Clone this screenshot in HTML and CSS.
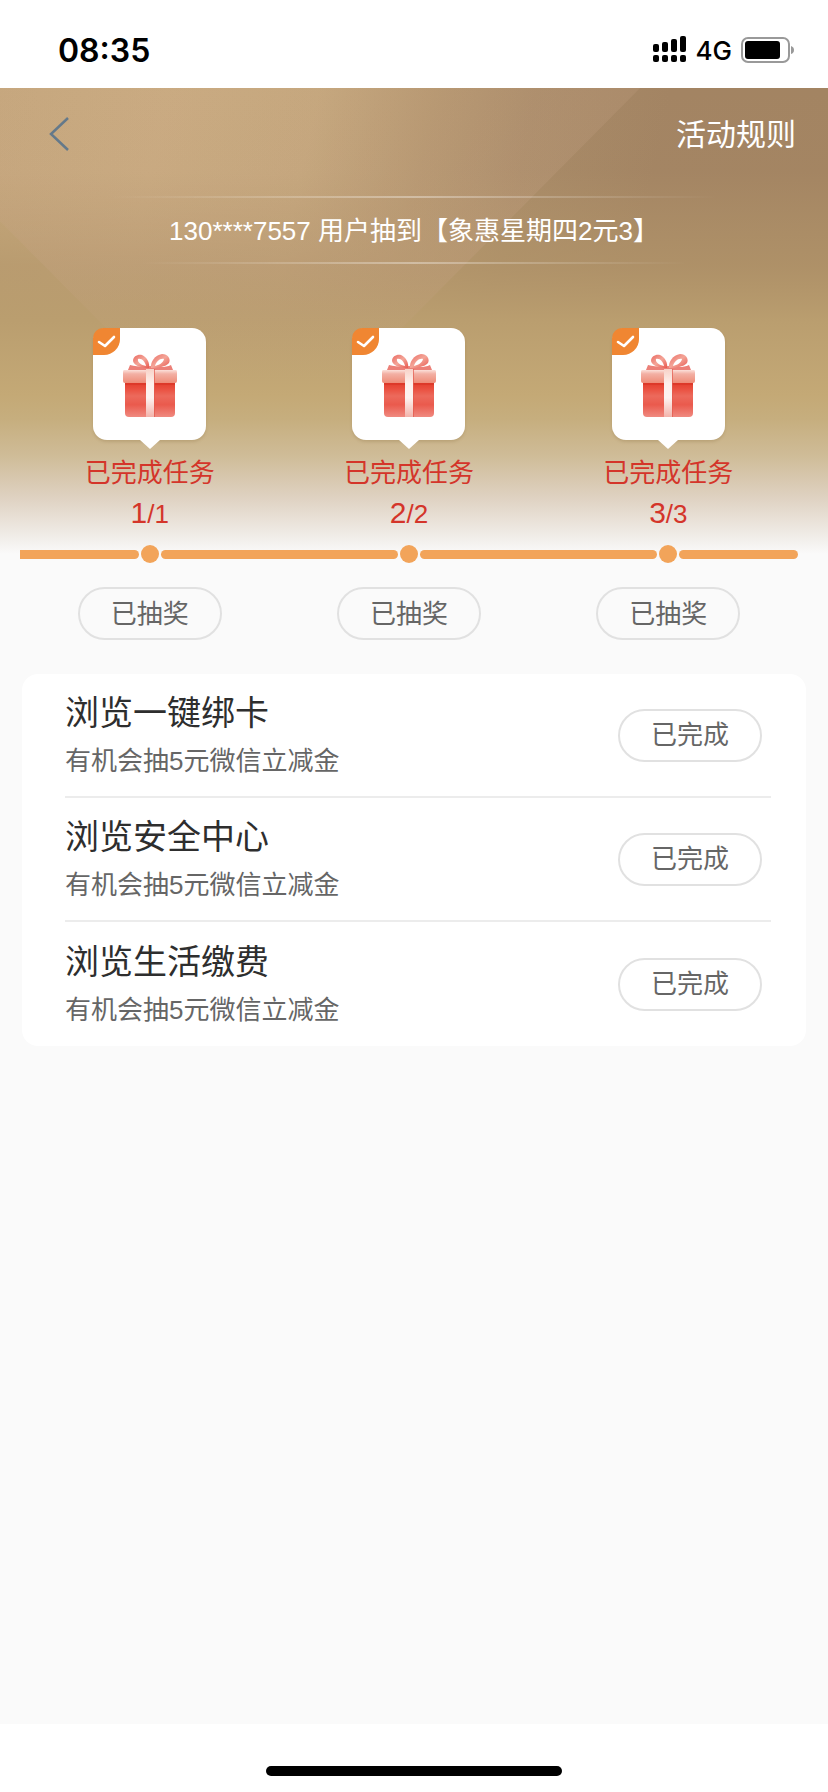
FILE: index.html
```html
<!DOCTYPE html>
<html lang="zh-CN">
<head>
    <meta charset="UTF-8">
    <meta name="viewport" content="width=device-width, initial-scale=1.0">
    <title>抽奖活动</title>
    <link rel="stylesheet" href="styles.css">
</head>
<body>
    <!-- shared icons -->
    <svg class="sprite" aria-hidden="true">
        <defs>
            <linearGradient id="boxBody" x1="0" y1="0" x2="0" y2="1">
                <stop offset="0" stop-color="#e23b2a"></stop>
                <stop offset="0.2" stop-color="#ea5040"></stop>
                <stop offset="0.4" stop-color="#ec6a5c"></stop>
                <stop offset="0.65" stop-color="#ea5a4d"></stop>
                <stop offset="1" stop-color="#f08a80"></stop>
            </linearGradient>
            <linearGradient id="boxLid" x1="0" y1="0" x2="0" y2="1">
                <stop offset="0" stop-color="#fbe0da"></stop>
                <stop offset="0.3" stop-color="#f3b0a4"></stop>
                <stop offset="1" stop-color="#ee8c78"></stop>
            </linearGradient>
            <linearGradient id="ribbon" x1="0" y1="0" x2="0" y2="1">
                <stop offset="0" stop-color="#f8d2c8"></stop>
                <stop offset="0.3" stop-color="#fdf0ec"></stop>
                <stop offset="0.6" stop-color="#fdf3f0"></stop>
                <stop offset="1" stop-color="#f3b3ab"></stop>
            </linearGradient>
            <linearGradient id="bow" x1="0" y1="0" x2="1" y2="1">
                <stop offset="0" stop-color="#ea6a62"></stop>
                <stop offset="0.5" stop-color="#f4a598"></stop>
                <stop offset="1" stop-color="#e8584e"></stop>
            </linearGradient>
        </defs>
        <symbol id="gift" viewBox="0 0 54 64">
            <path d="M7 11C15 13 22 13 27 12C34 13 42 14 48 11L50 16H5Z" fill="#ec8078"></path>
            <path d="M26 14C19 14 11 12 10 7C10 2 15 0 19 1C24 3 27 9 26 14Z" fill="url(#bow)"></path>
            <path d="M23 12C18 11 14 8 15 5C19 4 22 8 23 12Z" fill="#fff"></path>
            <path d="M28 14C27 8 32 1 39 0C45 0 48 5 46 9C43 13 34 14 28 14Z" fill="url(#bow)"></path>
            <path d="M32 12C33 8 37 4 41 5C40 9 36 11 32 12Z" fill="#fff"></path>
            <path d="M2 28H52V59Q52 63 48 63H6Q2 63 2 59Z" fill="url(#boxBody)"></path>
            <path d="M1 16H53Q54 16 54 18V27Q54 29 52 29H2Q0 29 0 27V18Q0 16 1 16Z" fill="url(#boxLid)"></path>
            <path d="M2 29H52V31H2Z" fill="#d93425" opacity="0.6"></path>
            <path d="M23 15H31V63H23Z" fill="url(#ribbon)"></path>
            <path d="M31 15H32V63H31Z" fill="#e25a4d" opacity="0.7"></path>
        </symbol>
        <symbol id="check" viewBox="0 0 27 27">
            <path d="M6 14L12 18L21 9" fill="none" stroke="#fff" stroke-width="2.6" stroke-linecap="round" stroke-linejoin="round"></path>
        </symbol>
    </svg>

    <div class="status-bar">
        <span class="time">08:35</span>
        <div class="status-icons">
            <svg class="signal" viewBox="0 0 34 27" aria-hidden="true">
                <rect x="0" y="8" width="6" height="8" rx="2"></rect>
                <rect x="9" y="6" width="6" height="10" rx="2"></rect>
                <rect x="18" y="3" width="6" height="13" rx="2"></rect>
                <rect x="27" y="0" width="6" height="16" rx="2"></rect>
                <rect x="0" y="19" width="6" height="7" rx="2"></rect>
                <rect x="9" y="19" width="6" height="7" rx="2"></rect>
                <rect x="18" y="19" width="6" height="7" rx="2"></rect>
                <rect x="27" y="19" width="6" height="7" rx="2"></rect>
            </svg>
            <span class="network">4G</span>
            <svg class="battery" viewBox="0 0 54 26" aria-hidden="true">
                <rect x="1" y="1" width="47" height="24" rx="6" fill="none" stroke="#999" stroke-width="2"></rect>
                <rect x="4" y="4" width="35" height="18" rx="3"></rect>
                <path d="M50 9Q53 10 53 13T50 17Z" fill="#999"></path>
            </svg>
        </div>
    </div>

    <main class="page">
        <section class="hero">
            <svg class="hero-bg" viewBox="0 0 828 462" preserveAspectRatio="none" aria-hidden="true">
                <defs>
                    <linearGradient id="bgAcross" x1="0" y1="0" x2="1" y2="0.12">
                        <stop offset="0" stop-color="#c6a87c"></stop>
                        <stop offset="0.2" stop-color="#caac80"></stop>
                        <stop offset="0.38" stop-color="#c5a87c"></stop>
                        <stop offset="0.52" stop-color="#b4966e"></stop>
                        <stop offset="0.64" stop-color="#a88a67"></stop>
                        <stop offset="0.8" stop-color="#a38463"></stop>
                        <stop offset="1" stop-color="#a38462"></stop>
                    </linearGradient>
                    <linearGradient id="bgDown" x1="0" y1="0" x2="0" y2="1">
                        <stop offset="0" stop-color="#b5986c" stop-opacity="0"></stop>
                        <stop offset="0.18" stop-color="#b5986c" stop-opacity="0.05"></stop>
                        <stop offset="0.38" stop-color="#b3966a" stop-opacity="0.7"></stop>
                        <stop offset="0.5" stop-color="#ba9e6f"></stop>
                        <stop offset="0.66" stop-color="#c4a976"></stop>
                        <stop offset="0.71" stop-color="#c6ae7e"></stop>
                        <stop offset="0.79" stop-color="#cfbc98"></stop>
                        <stop offset="0.88" stop-color="#dfd2c2"></stop>
                        <stop offset="0.96" stop-color="#f0ece7"></stop>
                        <stop offset="1" stop-color="#fafafa"></stop>
                    </linearGradient>
                    <linearGradient id="beam" x1="0" y1="0" x2="0" y2="1">
                        <stop offset="0" stop-color="#c8a488" stop-opacity="0.2"></stop>
                        <stop offset="0.6" stop-color="#c8a488" stop-opacity="0.25"></stop>
                        <stop offset="1" stop-color="#c8a488" stop-opacity="0"></stop>
                    </linearGradient>
                </defs>
                <rect width="828" height="462" fill="url(#bgAcross)"></rect>
                <rect width="828" height="462" fill="url(#bgDown)"></rect>
                <path d="M0 0H640L350 290H158L0 132Z" fill="url(#beam)"></path>
            </svg>

            <nav class="nav">
                <button class="back" type="button" aria-label="返回">
                    <svg viewBox="0 0 20 36" aria-hidden="true">
                        <path d="M19 2L2 18L19 34" fill="none" stroke="#64798a" stroke-width="2.5"></path>
                    </svg>
                </button>
                <a class="rules" href="#">活动规则</a>
            </nav>

            <p class="notice">130****7557 用户抽到【象惠星期四2元3】</p>

            <ol class="stages">
                <li class="stage">
                    <div class="gift-card">
                        <svg class="gift"><use href="#gift"></use></svg>
                        <svg class="check"><use href="#check"></use></svg>
                    </div>
                    <p class="stage-label">已完成任务</p>
                    <p class="stage-count"><span class="done">1</span>/1</p>
                    <div class="track">
                        <span class="bar bar-left"></span>
                        <span class="dot"></span>
                        <span class="bar bar-right"></span>
                    </div>
                    <button class="pill" type="button">已抽奖</button>
                </li>
                <li class="stage">
                    <div class="gift-card">
                        <svg class="gift"><use href="#gift"></use></svg>
                        <svg class="check"><use href="#check"></use></svg>
                    </div>
                    <p class="stage-label">已完成任务</p>
                    <p class="stage-count"><span class="done">2</span>/2</p>
                    <div class="track">
                        <span class="bar bar-left"></span>
                        <span class="dot"></span>
                        <span class="bar bar-right"></span>
                    </div>
                    <button class="pill" type="button">已抽奖</button>
                </li>
                <li class="stage">
                    <div class="gift-card">
                        <svg class="gift"><use href="#gift"></use></svg>
                        <svg class="check"><use href="#check"></use></svg>
                    </div>
                    <p class="stage-label">已完成任务</p>
                    <p class="stage-count"><span class="done">3</span>/3</p>
                    <div class="track">
                        <span class="bar bar-left"></span>
                        <span class="dot"></span>
                        <span class="bar bar-last"></span>
                    </div>
                    <button class="pill" type="button">已抽奖</button>
                </li>
            </ol>
        </section>

        <ul class="tasks">
            <li class="task">
                <div class="task-text">
                    <h2>浏览一键绑卡</h2>
                    <p>有机会抽5元微信立减金</p>
                </div>
                <button class="pill" type="button">已完成</button>
            </li>
            <li class="task">
                <div class="task-text">
                    <h2>浏览安全中心</h2>
                    <p>有机会抽5元微信立减金</p>
                </div>
                <button class="pill" type="button">已完成</button>
            </li>
            <li class="task">
                <div class="task-text">
                    <h2>浏览生活缴费</h2>
                    <p>有机会抽5元微信立减金</p>
                </div>
                <button class="pill" type="button">已完成</button>
            </li>
        </ul>
    </main>

    <footer class="home-area">
        <div class="home-bar"></div>
    </footer>
</body>
</html>
```
FILE: styles.css
```css
:root {
    --bg: #fafafa;
    --orange: #f2a45a;
    --badge: #f08632;
    --red: #d4352a;
    --text: #2e2e2e;
    --text-gray: #666;
    --border: #e1e1e1;
}

* {
    margin: 0;
    padding: 0;
    box-sizing: border-box;
}

body {
    font-family: "Liberation Sans", "Noto Sans CJK SC", sans-serif;
    font-size: 26px;
    color: var(--text);
    background-color: #fff;
    min-height: 100vh;
    display: flex;
    flex-direction: column;
}

ol,
ul {
    list-style: none;
}

button {
    font: inherit;
    background: none;
    border: none;
    cursor: pointer;
}

.sprite {
    position: absolute;
    width: 0;
    height: 0;
}

.status-bar {
    height: 88px;
    padding: 12px 33px 0 58px;
    display: flex;
    justify-content: space-between;
    align-items: center;
    font-family: Inter, sans-serif;
    color: #000;
}

.time {
    font-size: 32px;
    font-weight: 600;
}

.status-icons {
    display: flex;
    align-items: center;
    gap: 9px;
}

.signal {
    width: 34px;
    height: 27px;
    margin-bottom: 2px;
}

.network {
    font-weight: 500;
}

.battery {
    width: 54px;
    height: 26px;
    margin-bottom: 1px;
}

.page {
    flex: 1;
    background-color: var(--bg);
}

.hero {
    position: relative;
}

.hero-bg {
    position: absolute;
    top: 0;
    left: 0;
    width: 100%;
    height: 466px;
}

.nav {
    position: relative;
    height: 92px;
    padding: 0 32px 0 49px;
    display: flex;
    justify-content: space-between;
    align-items: center;
}

.back {
    width: 20px;
    height: 36px;
}

.back svg {
    display: block;
    width: 20px;
    height: 36px;
}

.rules {
    padding-bottom: 4px;
    color: #fff;
    font-size: 30px;
    text-decoration: none;
}

.notice {
    position: relative;
    margin: 16px 110px 0;
    padding: 15px 0 13px;
    line-height: 40px;
    color: #fff;
    text-align: center;
    white-space: nowrap;
    background:
        linear-gradient(90deg, transparent, rgba(255, 255, 255, 0.35), transparent) top / 100% 2px no-repeat,
        linear-gradient(90deg, transparent 5%, rgba(255, 255, 255, 0.35), transparent 95%) bottom / 100% 2px no-repeat;
}

.stages {
    position: relative;
    margin: 64px 30px 0 20px;
    display: flex;
}

.stage {
    flex: 1;
    display: flex;
    flex-direction: column;
    align-items: center;
}

.gift-card {
    position: relative;
    width: 113px;
    height: 112px;
    border-radius: 14px;
    background-color: #fff;
    box-shadow: 0 2px 3px rgba(120, 90, 40, 0.2);
    display: flex;
    justify-content: center;
    align-items: center;
}

.gift-card::after {
    content: "";
    position: absolute;
    top: 100%;
    left: 50%;
    margin-left: -10px;
    border: 10px solid transparent;
    border-top: 9px solid #fff;
    border-bottom: none;
}

.gift {
    width: 54px;
    height: 64px;
    margin-top: 4px;
}

.check {
    position: absolute;
    top: 0;
    left: 0;
    width: 27px;
    height: 27px;
    border-radius: 10px 0 16px 0;
    background-color: var(--badge);
}

.stage-label {
    margin-top: 13px;
    line-height: 40px;
    color: var(--red);
}

.stage-count {
    line-height: 40px;
    color: var(--red);
}

.done {
    font-size: 30px;
}

.track {
    width: 100%;
    margin-top: 11px;
    display: flex;
    align-items: center;
    gap: 2px;
}

.bar {
    flex: 1;
    height: 9px;
    background-color: var(--orange);
}

.bar-left {
    border-radius: 0 5px 5px 0;
}

.bar-right {
    border-radius: 5px 0 0 5px;
}

.bar-last {
    border-radius: 5px;
}

.dot {
    width: 18px;
    height: 18px;
    border-radius: 50%;
    background-color: var(--orange);
}

.pill {
    width: 144px;
    height: 53px;
    border: 2px solid var(--border);
    border-radius: 27px;
    color: var(--text-gray);
    line-height: 40px;
}

.stage .pill {
    margin-top: 24px;
}

.tasks {
    margin: 34px 22px 0;
    padding: 0 35px 0 43px;
    border-radius: 16px;
    background-color: #fff;
}

.task {
    height: 124px;
    padding-right: 9px;
    display: flex;
    justify-content: space-between;
    align-items: center;
}

.task:not(:last-child) {
    border-bottom: 2px solid #ececec;
}

.task-text {
    padding-bottom: 4px;
}

.task h2 {
    font-size: 34px;
    font-weight: normal;
    line-height: 56px;
}

.task p {
    line-height: 40px;
    color: var(--text-gray);
}

.home-area {
    height: 68px;
    padding-top: 42px;
    background-color: #fff;
}

.home-bar {
    width: 296px;
    height: 10px;
    margin: 0 auto;
    border-radius: 5px;
    background-color: #000;
}
```
